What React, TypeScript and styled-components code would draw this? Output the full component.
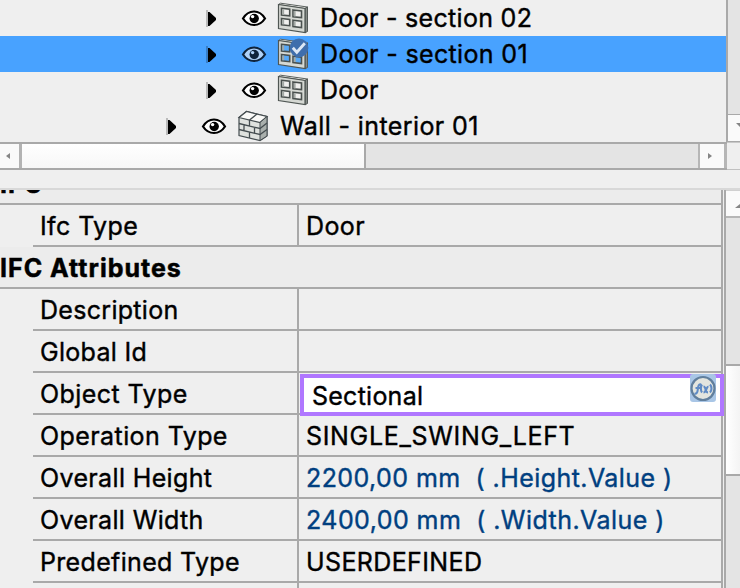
import React from 'react';
import styled, { createGlobalStyle, css } from 'styled-components';

const LINE = '#a9a9a9';
const PANEL = '#efefef';
const TRACK = '#e4e4e4';

const GlobalStyle = createGlobalStyle`
  * { box-sizing: border-box; }
  body { margin: 0; background: ${PANEL}; }
`;

const Window = styled.div`
  width: 740px;
  height: 588px;
  overflow: hidden;
  display: flex;
  flex-direction: column;
  background: ${PANEL};
  color: #000;
  font-family: Inter, 'Liberation Sans', sans-serif;
  font-size: 25px;
  line-height: 36px;
`;

const Label = styled.span<{ $track?: number }>`
  white-space: pre;
  letter-spacing: ${(p) => p.$track ?? 0}px;
  -webkit-text-stroke: 0.4px currentColor;
`;

const TreePane = styled.div`
  display: flex;
  height: 142px;
  flex: none;
`;

const TreeList = styled.div`
  width: 728px;
  border-right: 2px solid ${LINE};
  overflow: hidden;
`;

const TreeRow = styled.div<{ $selected?: boolean; $indent: number }>`
  display: flex;
  align-items: center;
  height: 36px;
  padding-left: ${(p) => p.$indent}px;
  background: ${(p) => (p.$selected ? '#48a2ff' : 'transparent')};
`;

const Icon = styled.svg<{ $gap?: number }>`
  display: block;
  flex: none;
  margin-right: ${(p) => p.$gap ?? 0}px;
`;

const SideTrack = styled.div`
  width: 12px;
  display: flex;
  flex-direction: column;
  justify-content: flex-end;
  background: ${TRACK};
`;

const ScrollButton = styled.div<{ $w: number; $h: number }>`
  width: ${(p) => p.$w}px;
  height: ${(p) => p.$h}px;
  flex: none;
  display: flex;
  align-items: center;
  justify-content: center;
  background: #fafafa;
  overflow: hidden;
`;

const DownButton = styled(ScrollButton)`
  border-top: 1px solid ${LINE};
  border-bottom: 1px solid ${LINE};
  justify-content: flex-end;
  padding-bottom: 4px;
`;

const HorizontalBar = styled.div`
  display: flex;
  flex: none;
  height: 28px;
`;

const HorizontalTrack = styled.div`
  width: 727px;
  display: flex;
  border-top: 2px solid ${LINE};
  border-bottom: 2px solid ${LINE};
  background: ${TRACK};
`;

const LeftButton = styled(ScrollButton)`
  border-right: 3px solid #b3b3b3;
  padding-right: 3px;
`;

const RightButton = styled(ScrollButton)`
  margin-left: auto;
  border-left: 2px solid #b6b6b6;
  border-right: 3px solid #b6b6b6;
  padding-right: 4px;
`;

const HorizontalThumb = styled.div`
  width: 344px;
  border-right: 2px solid ${LINE};
  background: linear-gradient(#fff, #f7f7f7);
`;

const Corner = styled.div`
  flex: 1;
  border-bottom: 1px solid #c0c0c0;
  border-top: 1px solid #c8c8c8;
`;

const Splitter = styled.div`
  flex: none;
  height: 20px;
  border-bottom: 2px solid #d8d8d8;
`;

const PropertyPane = styled.div`
  display: flex;
  height: 398px;
`;

const PropertyTable = styled.div`
  width: 723px;
  border-right: 2px solid ${LINE};
`;

const GroupHeader = styled.div<{ $h: number }>`
  display: flex;
  align-items: flex-end;
  height: ${(p) => p.$h}px;
  border-bottom: 2px solid ${LINE};
  background: #ececec;
  overflow: hidden;
  font-weight: 700;
`;

const GroupTitle = styled(Label)`
  flex: none;
  line-height: 40px;
  height: 40px;
  padding-top: 1px;
  -webkit-text-stroke: 0.5px currentColor;
`;

const PropertyRow = styled.div`
  display: flex;
  height: 42px;
  margin-left: 33px;
  border-bottom: 2px solid ${LINE};
  line-height: 43px;
`;

const NameCell = styled.div`
  width: 266px;
  flex: none;
  padding-left: 7px;
  border-right: 2px solid ${LINE};
`;

const ValueCell = styled.div<{ $formula?: boolean }>`
  flex: 1;
  min-width: 0;
  padding-left: 7px;
  ${(p) => p.$formula && css`color: #003f80;`}
`;

const Editor = styled.div`
  position: relative;
  z-index: 1;
  flex: none;
  display: flex;
  justify-content: space-between;
  width: 424px;
  height: 42px;
  margin: 1px 0 0 1px;
  padding-left: 8px;
  border: 4px solid #b077ff;
  background: #fff;
  line-height: 37px;
`;

const FormulaIcon = styled.svg`
  flex: none;
  margin: -4px 4px 0 0;
`;

const VerticalBar = styled.div`
  width: 16px;
  margin-left: 1px;
  display: flex;
  flex-direction: column;
  border-left: 2px solid ${LINE};
  background: ${TRACK};
`;

const UpButton = styled(ScrollButton)`
  border-top: 1px solid #d0d0d0;
  border-bottom: 2px solid #b6b6b6;
  justify-content: flex-end;
  padding-top: 6px;
`;

const VerticalThumb = styled.div`
  height: 112px;
  margin-top: 146px;
  border-top: 2px solid ${LINE};
  border-bottom: 2px solid ${LINE};
  background: linear-gradient(90deg, #fff, #f4f4f4);
`;

const Expander = () => (
  <Icon width="10" height="18" viewBox="0 0 10 18" $gap={25}>
    <path d="M0 1h2v17H0z" fill="#000" opacity=".22" />
    <path d="M2 3h1.500L10 9v2l-6.500 6H2z" fill="#000" />
  </Icon>
);

const Eye = ({ selected }: { selected?: boolean }) => (
  <Icon width="26" height="18" viewBox="0 0 26 18" $gap={10}>
    <path
      d="M2 9.500C5 4.400 9 2.500 13 2.500S21 4.400 24 9.500C21 14.100 17 16 13 16S5 14.100 2 9.500z"
      fill={selected ? '#afd1f7' : '#fff'}
      stroke={selected ? '#10243b' : '#000'}
      strokeWidth="2.200"
    />
    <circle cx="13.200" cy="9.500" r="4.700" fill={selected ? '#10243b' : '#000'} />
    <circle cx="11.600" cy="7.600" r="1.700" fill={selected ? '#afd1f7' : '#fff'} />
  </Icon>
);

const panes = [
  'M4.500 6.300l8.200 1v6.500l-8.200-.8z',
  'M16 8l8.500 1v6.500l-8.500-.8z',
  'M4.500 16.500l8.200 .9v6.300l-8.200-.9z',
  'M16 18.200l8.500 .9v6.400l-8.500-.9z',
];

const DoorIcon = ({ selected }: { selected?: boolean }) => (
  <Icon width="32" height="32" viewBox="0 0 32 32" $gap={11}>
    <path d="M1.500 2.500L3.500 1.200l27 3.800-2.500 1.500z" fill="#f7f7f3" stroke="#5a605d" />
    <path d="M28 6.500l2.500-1.500v24.500L28 30.700z" fill="#858b87" stroke="#535957" />
    <path d="M1.500 2.500L28 6.500V30.500L1.500 26.500z" fill="#d5d8d3" stroke="#4f5653" strokeWidth="1.200" />
    {panes.map((d) => (
      <path key={d} d={d} fill={selected ? '#58a9f7' : '#f0f0ee'} stroke="#4a514f" strokeWidth="1.600" />
    ))}
    <path d="M6.200 12.500V7.300M17.700 14.200V9M6.200 22.200v-4.800M17.700 24v-4.800" stroke="#a3a9a5" strokeWidth="1.900" fill="none" />
    {selected && (
      <>
        <circle cx="22" cy="9.800" r="9.400" fill="#3f6eac" />
        <path d="M15.800 9.800l4 4.500 8-9" fill="none" stroke="#dce7f5" strokeWidth="2.800" />
      </>
    )}
  </Icon>
);

const WallIcon = () => (
  <Icon width="32" height="32" viewBox="0 0 32 32" $gap={11}>
    <path d="M2 7.500L9.500 1.500 30 6.500V26l-7 4.500L2 25.500z" fill="#dfe2de" stroke="#454d50" strokeWidth="1.200" />
    <path d="M2 7.500L9.500 1.500l20.500 5-7 6z" fill="#fafaf8" stroke="#454d50" strokeWidth="1.200" />
    <path d="M23 12.500l7-6V26l-7 4.500z" fill="#a9afac" stroke="#454d50" />
    <path
      d="M2 13.500L23 18.500l7-5.500M2 19.500L23 24.500l7-5M12.500 10l7.500-6M12.500 10v6M7 14.700v6M17.500 17.200v6M12.500 22v6"
      fill="none"
      stroke="#454d50"
      strokeWidth="1.300"
    />
  </Icon>
);

const Arrow = ({ d, w = 8 }: { d: string; w?: number }) => (
  <Icon width={w} height="8" viewBox={`0 0 ${w} 8`}>
    <path d={d} fill="#858585" />
  </Icon>
);

const FormulaBadge = () => (
  <FormulaIcon width="26" height="28" viewBox="0 0 26 28">
    <rect width="26" height="28" rx="3" fill="#a9c6e6" />
    <circle cx="13" cy="14.500" r="11.500" fill="#e3e5df" stroke="#617f9d" strokeWidth="2.200" />
    <path
      d="M4.500 19.500c2 .5 3-1 3.300-4s1-6 3.200-5M5.500 14h5M12 10.500c-1.500 2-1.500 6 0 8M13.500 12.500c3 0 1 6 4.500 6M18.500 12.500c-2 0-2.500 6-5 6M20 10.500c2 2 2 6 0 8"
      fill="none"
      stroke="#5f8bc5"
      strokeWidth="2.100"
    />
  </FormulaIcon>
);

type Node = { name: string; kind: 'door' | 'wall'; indent: number; selected?: boolean; track: number };
const nodes: Node[] = [
  { name: 'Door - section 02', kind: 'door', indent: 206, track: 0.3 },
  { name: 'Door - section 01', kind: 'door', indent: 206, selected: true, track: 0.35 },
  { name: 'Door', kind: 'door', indent: 206, track: 0.3 },
  { name: 'Wall - interior 01', kind: 'wall', indent: 166, track: 0.4 },
];

type Property = { name: string; value?: string; formula?: boolean; editing?: boolean; nameTrack?: number; track?: number };
const attributes: Property[] = [
  { name: 'Description', nameTrack: 0.3 },
  { name: 'Global Id', nameTrack: 0.3 },
  { name: 'Object Type', value: 'Sectional', editing: true, nameTrack: 0.42, track: 0.25 },
  { name: 'Operation Type', value: 'SINGLE_SWING_LEFT', nameTrack: 0.42, track: 0.67 },
  { name: 'Overall Height', value: '2200,00 mm  ( .Height.Value )', formula: true, nameTrack: 0.36, track: 0.43 },
  { name: 'Overall Width', value: '2400,00 mm  ( .Width.Value )', formula: true, nameTrack: 0.35, track: 0.44 },
  { name: 'Predefined Type', value: 'USERDEFINED', nameTrack: 0.33, track: 0.38 },
  { name: '' },
];

const PropertyLine = ({ item }: { item: Property }) => (
  <PropertyRow>
    <NameCell><Label $track={item.nameTrack}>{item.name}</Label></NameCell>
    {item.editing ? (
      <Editor>
        <Label $track={item.track}>{item.value}</Label>
        <FormulaBadge />
      </Editor>
    ) : (
      <ValueCell $formula={item.formula}><Label $track={item.track}>{item.value}</Label></ValueCell>
    )}
  </PropertyRow>
);

export default function App() {
  return (
    <Window>
      <GlobalStyle />
      <TreePane>
        <TreeList>
          {nodes.map((n) => (
            <TreeRow key={n.name} $selected={n.selected} $indent={n.indent}>
              <Expander />
              <Eye selected={n.selected} />
              {n.kind === 'door' ? <DoorIcon selected={n.selected} /> : <WallIcon />}
              <Label $track={n.track}>{n.name}</Label>
            </TreeRow>
          ))}
        </TreeList>
        <SideTrack>
          <DownButton $w={12} $h={28}><Arrow w={4} d="M0 1h4v4z" /></DownButton>
        </SideTrack>
      </TreePane>
      <HorizontalBar>
        <HorizontalTrack>
          <LeftButton $w={22} $h={24}><Arrow d="M6 1v6L2 4z" /></LeftButton>
          <HorizontalThumb />
          <RightButton $w={29} $h={24}><Arrow d="M2 1v6l4-3z" /></RightButton>
        </HorizontalTrack>
        <Corner />
      </HorizontalBar>
      <Splitter />
      <PropertyPane>
        <PropertyTable>
          <GroupHeader $h={15}><GroupTitle $track={1}>IFC</GroupTitle></GroupHeader>
          <PropertyLine item={{ name: 'Ifc Type', value: 'Door', nameTrack: 0.4, track: 0.4 }} />
          <GroupHeader $h={42}><GroupTitle $track={1}>IFC Attributes</GroupTitle></GroupHeader>
          {attributes.map((a) => (
            <PropertyLine key={a.name} item={a} />
          ))}
        </PropertyTable>
        <VerticalBar>
          <UpButton $w={14} $h={28}><Arrow w={5} d="M0 5h5V1z" /></UpButton>
          <VerticalThumb />
        </VerticalBar>
      </PropertyPane>
    </Window>
  );
}
